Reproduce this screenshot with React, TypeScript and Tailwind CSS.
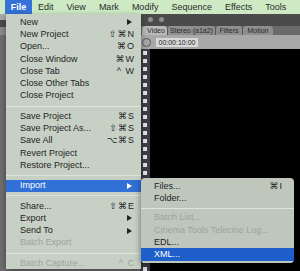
import React from "react";

type Item =
  | { sep: true }
  | {
      sep?: false;
      label: string;
      shortcut?: string;
      arrow?: boolean;
      disabled?: boolean;
      active?: boolean;
    };

const fileMenu: Item[] = [
  { label: "New", arrow: true },
  { label: "New Project", shortcut: "⇧⌘N" },
  { label: "Open...", shortcut: "⌘O" },
  { label: "Close Window", shortcut: "⌘W" },
  { label: "Close Tab", shortcut: "^ W" },
  { label: "Close Other Tabs" },
  { label: "Close Project" },
  { sep: true },
  { label: "Save Project", shortcut: "⌘S" },
  { label: "Save Project As...", shortcut: "⇧⌘S" },
  { label: "Save All", shortcut: "⌥⌘S" },
  { label: "Revert Project" },
  { label: "Restore Project..." },
  { sep: true },
  { label: "Import", arrow: true, active: true },
  { sep: true },
  { label: "Share...", shortcut: "⇧⌘E" },
  { label: "Export", arrow: true },
  { label: "Send To", arrow: true },
  { label: "Batch Export", disabled: true },
  { sep: true },
  { label: "Batch Capture...", shortcut: "^ C", disabled: true },
];

const importMenu: Item[] = [
  { label: "Files...", shortcut: "⌘I" },
  { label: "Folder..." },
  { sep: true },
  { label: "Batch List...", disabled: true },
  { label: "Cinema Tools Telecine Log...", disabled: true },
  { label: "EDL..." },
  { label: "XML...", active: true },
];

const menuBar = ["Edit", "View", "Mark", "Modify", "Sequence", "Effects", "Tools"];

function Arrow({ white }: { white?: boolean }) {
  return (
    <svg width="5" height="6" viewBox="0 0 5 6">
      <path d="M0 0 L5 3 L0 6 Z" fill={white ? "#ffffff" : "#222222"} />
    </svg>
  );
}

function MenuRows({ items, sub }: { items: Item[]; sub?: boolean }) {
  return (
    <>
      {items.map((it, i) => {
        if (it.sep) {
          return (
            <div key={i} className={`flex items-center ${sub ? "h-[7px]" : "h-[8px]"}`}>
              <div className="h-px w-full bg-[#dfe5dc]" />
            </div>
          );
        }
        const color = it.active
          ? "text-white"
          : it.disabled
          ? "text-[#9ba39a]"
          : "text-[#242424]";
        const bg = it.active ? (sub ? "bg-[#1f5fcb]" : "bg-[#3170d6]") : "";
        return (
          <div
            key={i}
            className={`flex h-[12.3px] items-center justify-between ${
              sub ? "pl-[13px] pr-[11px]" : "pl-[14px] pr-[6px]"
            } ${bg} ${color}`}
          >
            <span>{it.label}</span>
            {it.shortcut && <span className="tracking-[1px]">{it.shortcut}</span>}
            {it.arrow && (
              <span className="pr-[3px]">
                <Arrow white={it.active} />
              </span>
            )}
          </div>
        );
      })}
    </>
  );
}

export default function App() {
  const holes = Array.from({ length: 28 });
  return (
    <div
      className="relative h-[271px] w-[300px] overflow-hidden bg-[#6c6c6c] text-[9px] leading-none"
      style={{ fontFamily: '"Liberation Sans", "DejaVu Sans", sans-serif' }}
    >
      {/* menu bar */}
      <div className="flex h-[14px] items-center bg-[#cdeac4] text-[#2b2b2b]">
        <div className="ml-[5px] flex h-full w-[27px] items-center justify-center bg-[#3472d8] font-bold text-white">
          File
        </div>
        <div className="ml-[6px] flex gap-[13px]">
          {menuBar.map(m => (
            <span key={m}>{m}</span>
          ))}
        </div>
      </div>

      {/* background app window */}
      <div className="flex h-[257px]">
        <div className="flex w-[6px] flex-col">
          <div className="h-[6px] bg-[#a9a9a9]" />
          <div className="h-[7px] bg-[#4c4c4c]" />
          <div className="h-[8px] bg-[#8a8a8a]" />
          <div className="flex-1 bg-[#6e6e6e]" />
        </div>
        <div className="w-[134px] bg-[#6e6e6e]" />
        <div className="flex flex-1 flex-col">
          <div className="flex h-[12px] items-center gap-[6px] bg-[#4b4b4b] pl-[8px]">
            <div className="h-[5px] w-[5px] rounded-full bg-[#8e8e8e]" />
            <div className="h-[5px] w-[5px] rounded-full bg-[#8e8e8e]" />
          </div>
          <div className="flex h-[10px] items-end bg-[#6a6a6a] pl-[2px] text-[7px] text-[#2a2a2a]">
            <div className="flex h-[9px] w-[25px] items-center justify-center rounded-t-[3px] bg-[#b9b9b9] pl-[3px]">
              Video
            </div>
            <div className="flex h-[9px] w-[48px] items-center justify-center rounded-t-[3px] border-l border-[#555] bg-[#8f8f8f]">
              Stereo (a1a2)
            </div>
            <div className="flex h-[9px] w-[27px] items-center justify-center rounded-t-[3px] border-l border-[#555] bg-[#8f8f8f]">
              Filters
            </div>
            <div className="flex h-[9px] w-[31px] items-center justify-center rounded-t-[3px] border-l border-[#555] bg-[#8f8f8f]">
              Motion
            </div>
          </div>
          <div className="flex h-[14px] items-center bg-[#a8a8a8]">
            <div className="ml-[2px] h-[9px] w-[9px] rounded-full border border-[#555]" />
            <div className="ml-[5px] flex h-[9px] w-[42px] items-center justify-center bg-[#d9d9d9] text-[7px] text-[#222]">
              00:00:10:00
            </div>
          </div>
          <div className="flex flex-1">
            <div className="flex w-[10px] flex-col items-center gap-[4px] bg-[#3d3d46] pt-[2px]">
              {holes.map((_, i) => (
                <div key={i} className="h-[4px] w-[4px] bg-[#e6e6ea]" />
              ))}
            </div>
            <div className="flex-1 bg-black" />
          </div>
        </div>
      </div>

      {/* File menu */}
      <div className="absolute left-[6px] top-[14px] w-[135px] bg-[#c7d0c5] pt-[2px] shadow-[0_2px_6px_rgba(0,0,0,0.4)]">
        <MenuRows items={fileMenu} />
      </div>

      {/* Import submenu */}
      <div className="absolute left-[141px] top-[178px] w-[153px] rounded-[4px] bg-[#bfc7bd] py-[2px] shadow-[0_2px_6px_rgba(0,0,0,0.5)]">
        <MenuRows items={importMenu} sub />
      </div>
    </div>
  );
}
